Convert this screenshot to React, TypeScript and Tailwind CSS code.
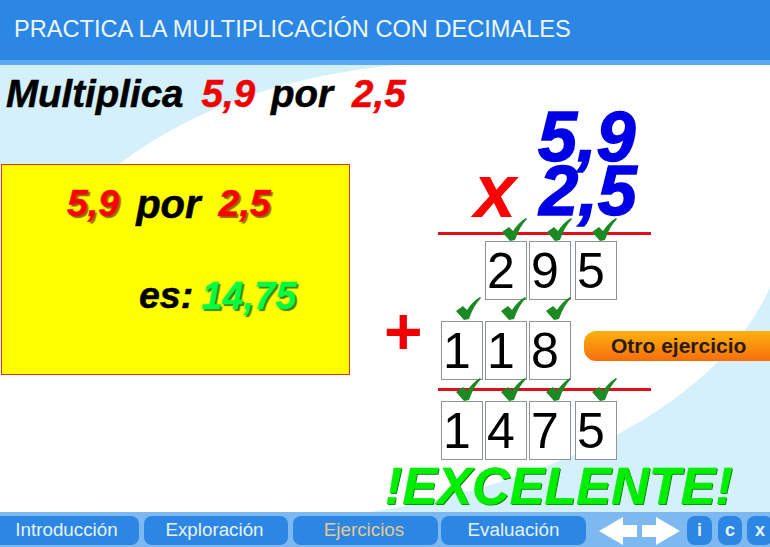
const sans = "font-['Liberation_Sans',Arial,sans-serif]";

function Check({ className }: { className: string }) {
  return (
    <svg viewBox="0 0 25 23" className={`absolute h-[23px] w-[25px] ${className}`}>
      <path d="M0 14 L7 9 L11 13 C14 8 19 3 24 0 L25 1 C20 6 16 13 13 22 L8 23 Z" fill="#1c8a22" />
    </svg>
  );
}

function Cell({ v, className = "" }: { v: string; className?: string }) {
  return (
    <div className={`flex h-[59px] w-[42px] shrink-0 items-center border border-[#8c9397] bg-white pl-[1px] text-[50px] leading-none text-black ${sans} ${className}`}>
      {v}
    </div>
  );
}

function NavTab({ label, className, active }: { label: string; className: string; active?: boolean }) {
  return (
    <div className={`flex h-[29px] shrink-0 items-center justify-center rounded-[8px] bg-[#2b87e3] pb-[1px] text-[18.8px] ${className} ${active ? "text-[#e8c88e]" : "text-[#e6f3ff]"} ${sans}`}>
      {label}
    </div>
  );
}

function RoundBtn({ label, className }: { label: string; className: string }) {
  return (
    <div className={`flex h-[29px] shrink-0 items-center justify-center rounded-[8px] bg-[#2b87e3] text-[18px] font-bold text-[#e6f3ff] ${sans} ${className}`}>
      {label}
    </div>
  );
}

export default function App() {
  return (
    <div className={`flex h-[547px] w-[770px] flex-col overflow-hidden bg-white ${sans}`}>
      <header className="flex h-[65px] shrink-0 border-b-[5px] border-[#5aa9f3] bg-[#2b87e3] pl-[14px] pt-[15px] text-[23.6px] leading-[28px] text-[#eef7ff]">
        PRACTICA LA MULTIPLICACIÓN CON DECIMALES
      </header>

      <main className="relative flex h-[447px] shrink-0 bg-white">
        <svg viewBox="0 0 770 447" className="absolute inset-0 h-full w-full">
          <path d="M0 0 H395 C280 12 190 45 118 100 H0 Z" fill="#d3f0fb" />
          <path d="M770 222 C745 280 690 330 620 368 C540 410 450 435 370 447 H770 Z" fill="#d3f0fb" />
        </svg>

        <section className="relative flex w-[384px] shrink-0 flex-col">
          <h1 className="ml-[6px] mt-[7px] flex h-[44px] items-center text-[38.5px] font-bold italic leading-none text-black [-webkit-text-stroke:0.5px_currentColor]">
            <span>Multiplica</span>
            <span className="ml-[18px] text-[#f00000]">5,9</span>
            <span className="ml-[16px]">por</span>
            <span className="ml-[19px] text-[#f00000]">2,5</span>
          </h1>
          <div className="ml-[1px] mt-[48px] flex h-[211px] w-[349px] flex-col border border-[#e2331a] bg-[#ffff00] text-[37.5px] font-bold italic leading-none [-webkit-text-stroke:0.5px_currentColor]">
            <div className="ml-[65px] mt-[18px] flex h-[42px] items-center [text-shadow:2px_2px_1px_rgba(90,60,0,0.75)]">
              <span className="text-[#ff0000]">5,9</span>
              <span className="ml-[17px] text-[40px] text-black [text-shadow:none]">por</span>
              <span className="ml-[18px] text-[#ff0000]">2,5</span>
            </div>
            <div className="ml-[137px] mt-[50px] flex h-[42px] items-center">
              <span className="text-black">es:</span>
              <span className="ml-[8px] text-[38px] text-[#00ff40] [text-shadow:2px_2px_1px_rgba(20,90,0,0.8)]">14,75</span>
            </div>
          </div>
        </section>

        <section className="relative flex w-[386px] flex-col">
          <div className="ml-[154px] mt-[42px] h-[60px] text-[70px] font-bold italic leading-[60px] text-[#0000e6] [-webkit-text-stroke:1.5px_currentColor]">5,9</div>
          <div className="mt-[-7px] flex h-[62px] items-center font-bold italic leading-[60px]">
            <span className="ml-[90px] text-[76px] text-[#ff0000]">x</span>
            <span className="ml-[23px] text-[70px] text-[#0000e6] [-webkit-text-stroke:1.5px_currentColor]">2,5</span>
          </div>
          <div className="ml-[54px] mt-[10px] h-[3px] w-[213px] bg-[#e0101a]" />
          <div className="ml-[101px] mt-[6px] flex gap-[2px]">
            <Cell v="2" /><Cell v="9" /><Cell v="5" className="ml-[2px]" />
          </div>
          <div className="mt-[21px] flex items-start">
            <div className="mt-[-20px] h-[60px] w-[57px] shrink-0 text-[66px] font-bold leading-[60px] text-[#f00000]">+</div>
            <div className="flex shrink-0 gap-[2px]">
              <Cell v="1" /><Cell v="1" /><Cell v="8" />
            </div>
            <div className="ml-[13px] mt-[10px] flex h-[30px] w-[200px] shrink-0 items-center rounded-[12px] bg-gradient-to-b from-[#fbb10f] to-[#f56d0c] pl-[27px] text-[21px] font-bold text-[#2b1a08]">
              Otro ejercicio
            </div>
          </div>
          <div className="ml-[54px] mt-[8px] h-[3px] w-[213px] bg-[#e0101a]" />
          <div className="ml-[57px] mt-[10px] flex gap-[2px]">
            <Cell v="1" /><Cell v="4" /><Cell v="7" /><Cell v="5" className="ml-[2px]" />
          </div>
          <div className="ml-[1px] mt-[1px] whitespace-nowrap text-[52.2px] font-bold italic leading-[50px] text-[#00ee00] [-webkit-text-stroke:0.5px_currentColor] [text-shadow:1px_1px_0_#0a7a0a]">
            !EXCELENTE!
          </div>

          <Check className="left-[118px] top-[153px]" />
          <Check className="left-[163px] top-[153px]" />
          <Check className="left-[208px] top-[153px]" />
          <Check className="left-[72px] top-[232px]" />
          <Check className="left-[117px] top-[232px]" />
          <Check className="left-[162px] top-[232px]" />
          <Check className="left-[72px] top-[313px]" />
          <Check className="left-[117px] top-[313px]" />
          <Check className="left-[162px] top-[313px]" />
          <Check className="left-[208px] top-[313px]" />
        </section>
      </main>

      <nav className="flex h-[35px] shrink-0 items-start overflow-hidden bg-[#7db8f1] pt-[4px]">
        <NavTab label="Introducción" className="w-[139px] rounded-l-none pr-[6px]" />
        <NavTab label="Exploración" className="ml-[5px] w-[144px] pr-[3px]" />
        <NavTab label="Ejercicios" className="ml-[5px] w-[145px] pr-[3px]" active />
        <NavTab label="Evaluación" className="ml-[3px] w-[145px]" />
        <svg viewBox="0 0 81 28" className="ml-[13px] mt-[1px] h-[28px] w-[81px] shrink-0">
          <path d="M0 14 L24 0 V8 H38 V20 H24 V28 Z" fill="#fff" />
          <path d="M81 14 L57 0 V8 H43 V20 H57 V28 Z" fill="#fff" />
        </svg>
        <RoundBtn label="i" className="ml-[7px] w-[25px]" />
        <RoundBtn label="c" className="ml-[6px] w-[24px]" />
        <RoundBtn label="x" className="ml-[5px] w-[26px]" />
      </nav>
    </div>
  );
}
